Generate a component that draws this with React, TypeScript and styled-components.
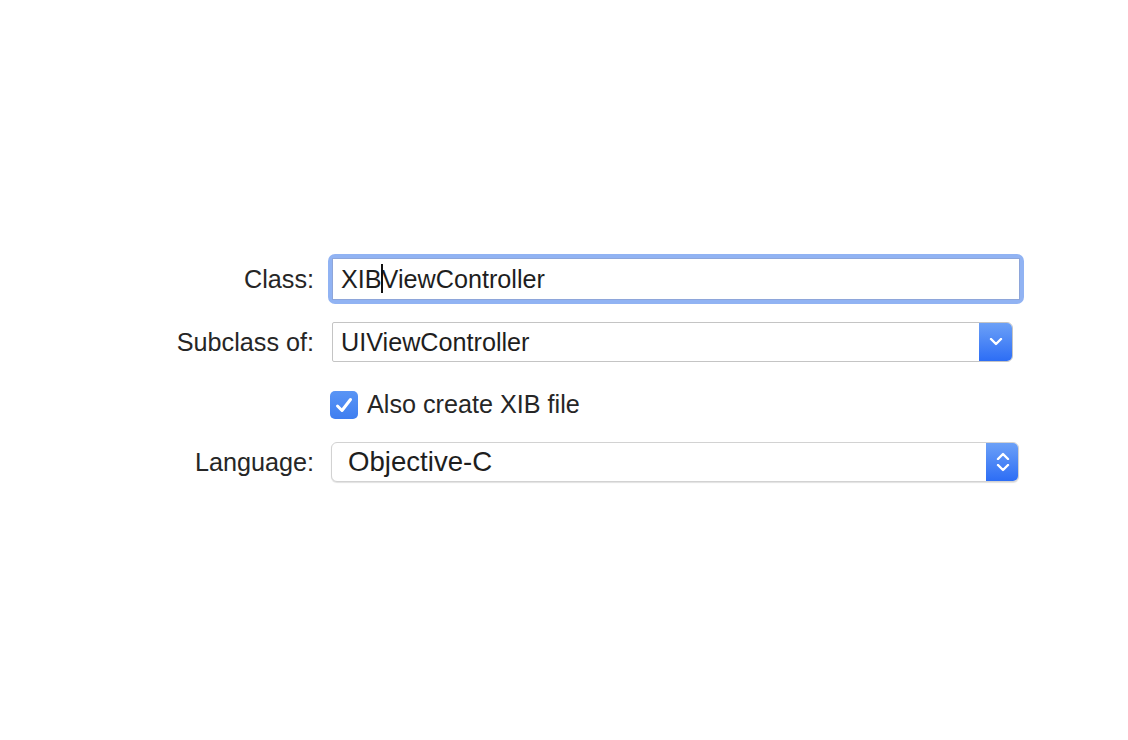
import React from "react";
import styled, { createGlobalStyle } from "styled-components";

const Global = createGlobalStyle`
  html, body { margin: 0; padding: 0; background: #ffffff; }
  body { font-family: "Liberation Sans", Arial, sans-serif; color: #262626; }
`;

const Page = styled.div`
  width: 1128px;
  height: 740px;
  box-sizing: border-box;
  padding-top: 254px;
  background: #ffffff;
`;

const Form = styled.div`
  display: flex;
  flex-direction: column;
`;

const Row = styled.div<{ $top?: number; $h: number }>`
  display: grid;
  grid-template-columns: 314px 1fr;
  column-gap: 14px;
  align-items: center;
  height: ${(p) => p.$h}px;
  margin-top: ${(p) => p.$top ?? 0}px;
`;

const Label = styled.div`
  text-align: right;
  font-size: 25.2px;
  color: #262626;
  white-space: nowrap;
`;

const Cell = styled.div<{ $shift?: number }>`
  display: flex;
  align-items: center;
  margin-left: ${(p) => p.$shift ?? 0}px;
`;

const Ring = styled.div`
  width: 696px;
  height: 50px;
  box-sizing: border-box;
  padding: 4px;
  border-radius: 7px;
  background: #91b3f3;
`;

const Field = styled.div`
  height: 100%;
  box-sizing: border-box;
  background: #ffffff;
  border: 1px solid #8ea6da;
  display: flex;
  align-items: center;
  padding-left: 8px;
  font-size: 25.2px;
  color: #1e1e1e;
`;

const Caret = styled.span`
  display: inline-block;
  width: 2px;
  height: 29px;
  background: #111;
  margin: 0 -1px;
  vertical-align: middle;
  position: relative;
  top: -1px;
`;

const Popup = styled.div<{ $w: number; $round?: boolean }>`
  width: ${(p) => p.$w}px;
  height: 40px;
  box-sizing: border-box;
  display: flex;
  align-items: stretch;
  background: #ffffff;
  border: 1px solid ${(p) => (p.$round ? "#d2d2d2" : "#c4c4c4")};
  border-radius: ${(p) => (p.$round ? "6px" : "2px 6px 6px 2px")};
  box-shadow: ${(p) => (p.$round ? "0 1px 1px rgba(0,0,0,0.12)" : "none")};
  overflow: hidden;
`;

const PopupText = styled.div<{ $size: number; $pad: number }>`
  flex: 1;
  display: flex;
  align-items: center;
  padding-left: ${(p) => p.$pad}px;
  font-size: ${(p) => p.$size}px;
  color: #1e1e1e;
  white-space: nowrap;
`;

const BlueButton = styled.div<{ $w: number }>`
  width: ${(p) => p.$w}px;
  margin: -1px -1px -1px 0;
  background: linear-gradient(#6ea2f7, #2b6cf5);
  display: flex;
  flex-direction: column;
  align-items: center;
  justify-content: center;
  gap: 4px;
`;

const CheckRow = styled.label`
  display: flex;
  align-items: center;
  gap: 9px;
  font-size: 25.2px;
  color: #262626;
`;

const CheckBox = styled.span`
  width: 28px;
  height: 28px;
  box-sizing: border-box;
  border-radius: 5px;
  background: linear-gradient(#5a95f5, #3f7ef0);
  display: flex;
  align-items: center;
  justify-content: center;
`;

const Chevron = ({ up }: { up?: boolean }) => (
  <svg width="14" height="8" viewBox="0 0 14 8">
    <path
      d={up ? "M2 7 L7 2 L12 7" : "M2 1 L7 6 L12 1"}
      fill="none"
      stroke="#ffffff"
      strokeWidth="2.4"
      strokeLinecap="round"
      strokeLinejoin="round"
    />
  </svg>
);

export default function App() {
  return (
    <Page>
      <Global />
      <Form>
        <Row $h={50}>
          <Label>Class:</Label>
          <Cell>
            <Ring>
              <Field>
                XIB<Caret />ViewController
              </Field>
            </Ring>
          </Cell>
        </Row>
        <Row $top={18} $h={40}>
          <Label>Subclass of:</Label>
          <Cell $shift={4}>
            <Popup $w={681}>
              <PopupText $size={25.2} $pad={8}>UIViewController</PopupText>
              <BlueButton $w={34}>
                <Chevron />
              </BlueButton>
            </Popup>
          </Cell>
        </Row>
        <Row $top={28} $h={28}>
          <div />
          <Cell $shift={2}>
            <CheckRow>
              <CheckBox>
                <svg width="20" height="18" viewBox="0 0 20 18">
                  <path
                    d="M3.5 10 L8 14.5 L16.5 3.5"
                    fill="none"
                    stroke="#ffffff"
                    strokeWidth="3"
                    strokeLinecap="round"
                    strokeLinejoin="round"
                  />
                </svg>
              </CheckBox>
              Also create XIB file
            </CheckRow>
          </Cell>
        </Row>
        <Row $top={24} $h={40}>
          <Label>Language:</Label>
          <Cell $shift={3}>
            <Popup $w={688} $round>
              <PopupText $size={27.6} $pad={16}>Objective-C</PopupText>
              <BlueButton $w={33}>
                <Chevron up />
                <Chevron />
              </BlueButton>
            </Popup>
          </Cell>
        </Row>
      </Form>
    </Page>
  );
}
